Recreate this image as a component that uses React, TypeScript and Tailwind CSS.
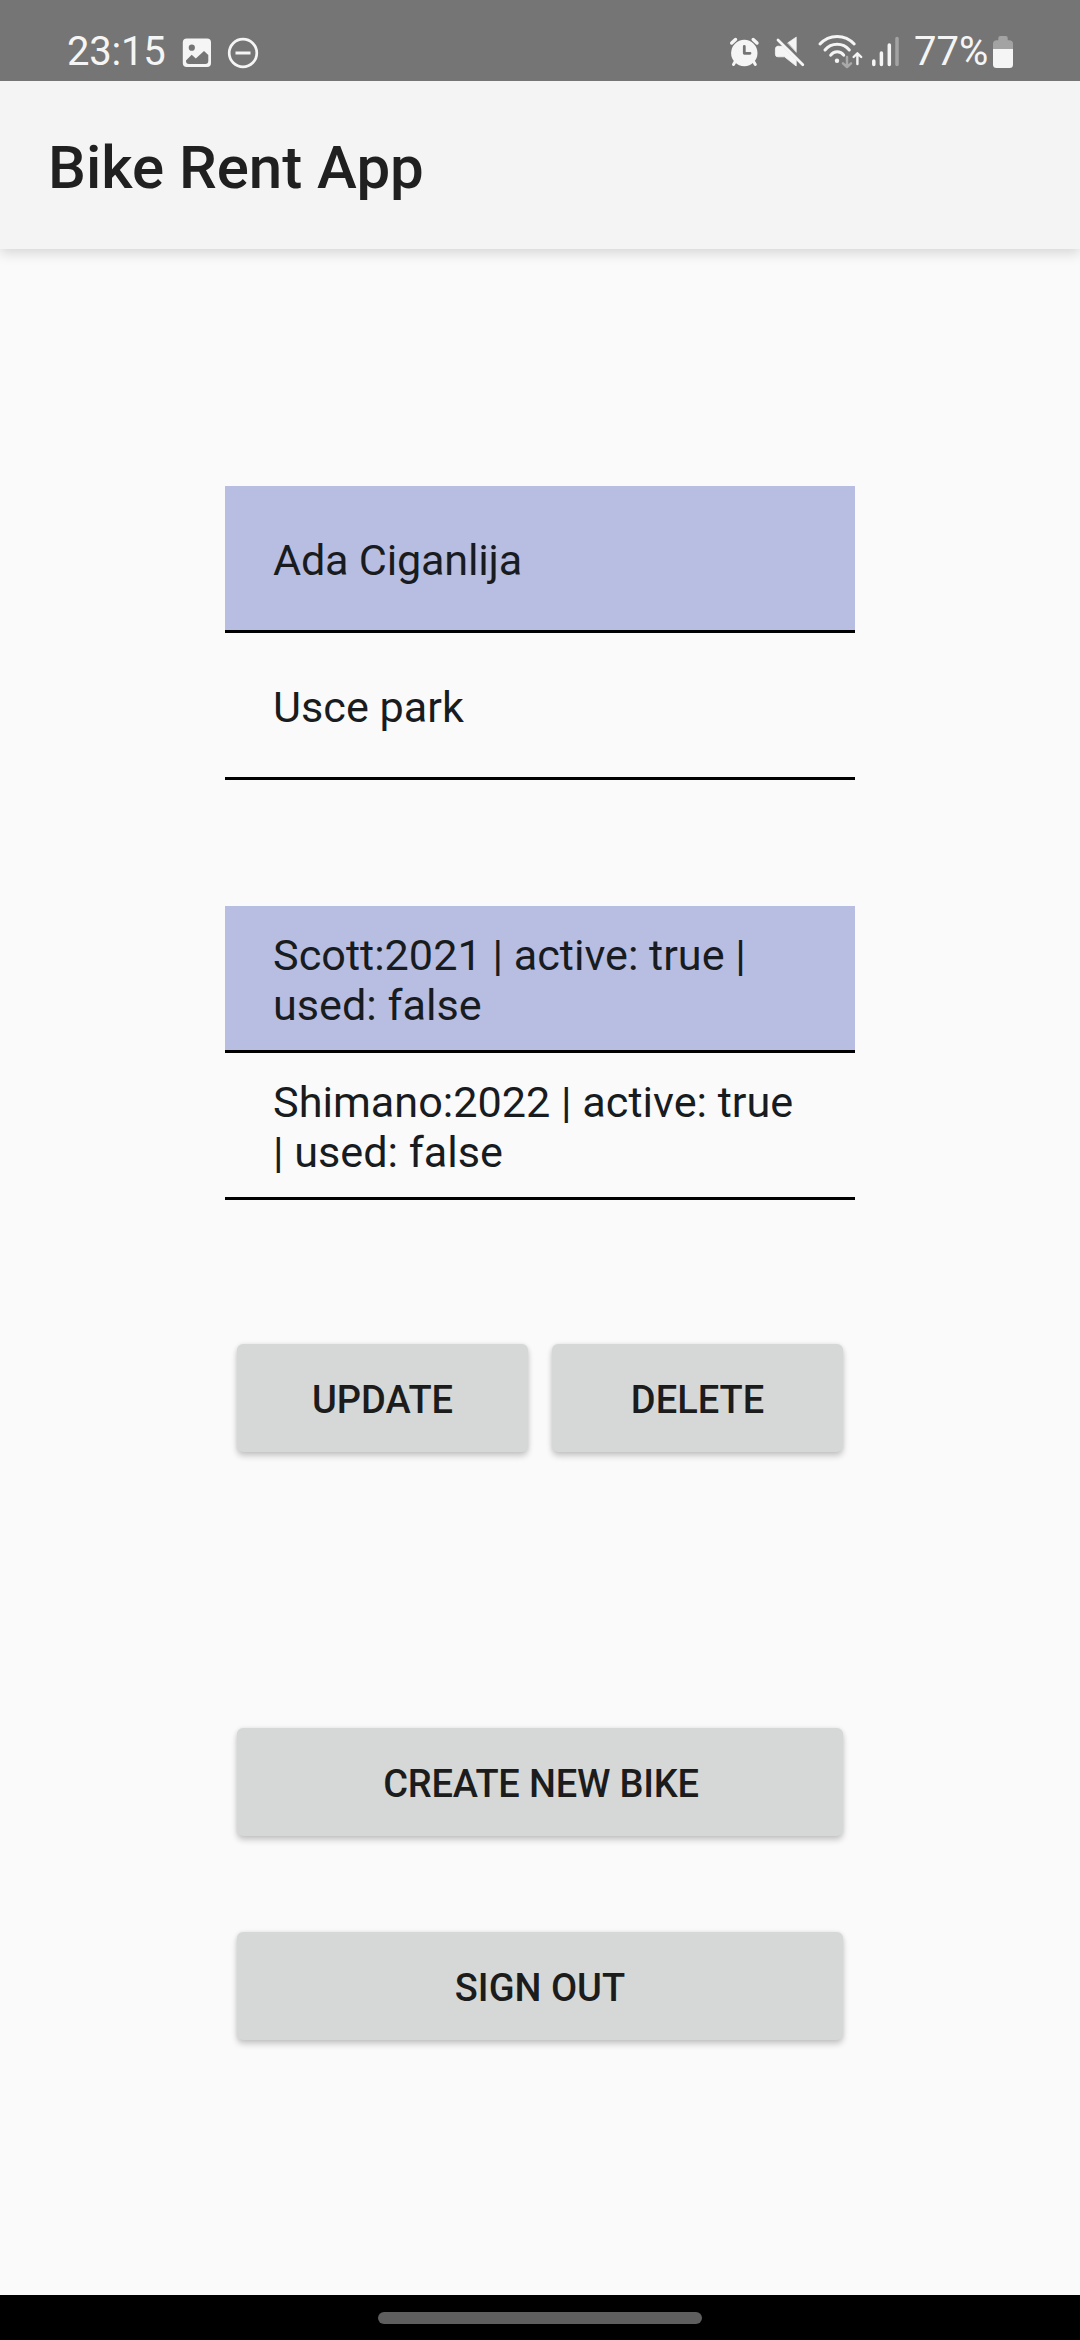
import React from "react";

function NotificationIcons() {
  return (
    <svg className="h-[81px] w-[100px]" viewBox="171 0 100 81" fill="none" strokeLinecap="round">
      <rect x="182.8" y="38.5" width="28.2" height="28.5" rx="4" fill="#f5f5f5" />
      <circle cx="191.8" cy="47.7" r="3.1" fill="#757575" />
      <path d="M186 60.5L191.7 54.8L195.8 58.6L204 51L208.3 55V61Q208.3 64 205.3 64H189Q186 64 186 61Z" fill="#757575" />
      <circle cx="243" cy="53" r="13.8" stroke="#f5f5f5" strokeWidth="2.7" />
      <path d="M235.5 53H250.5" stroke="#f5f5f5" strokeWidth="3" strokeLinecap="butt" />
    </svg>
  );
}

function SystemIcons() {
  return (
    <svg
      className="h-[81px] w-[190px]"
      viewBox="720 0 190 81"
      fill="none"
      stroke="#f5f5f5"
      strokeLinecap="round"
      strokeLinejoin="round"
    >
      <circle cx="744.3" cy="53" r="13.2" fill="#f5f5f5" stroke="none" />
      <path d="M731.7 43L735.5 39.5M753.2 39.5L757 43" strokeWidth="3.4" />
      <path d="M735.5 61L733.5 64.5M753.3 61L755.3 64.5" strokeWidth="3" />
      <path d="M744.3 46.5V53.3H750" stroke="#757575" strokeWidth="2.8" />

      <path d="M787.8 42.8L796.3 37V52Z" fill="#f5f5f5" strokeWidth=".6" />
      <path d="M778 46.3H782.5L796.2 60V66L784.5 56.8H778Q775.4 56.8 775.4 54.2V49Q775.4 46.3 778 46.3Z" fill="#f5f5f5" strokeWidth=".8" />
      <path d="M778 40L802.8 64.7" strokeWidth="2.8" />

      <path d="M820 44A23 23 0 0 1 854.2 44" strokeWidth="3" />
      <path d="M825 50A15.6 15.6 0 0 1 849.3 50" strokeWidth="3" />
      <path d="M830.7 55.2A8 8 0 0 1 843.7 55.2" strokeWidth="3" />
      <circle cx="837" cy="60.7" r="2.2" fill="#f5f5f5" stroke="none" />
      <path d="M847 57V67M843 63.3L847 67.2L851 63.3" stroke="#a9a9a9" strokeWidth="2.5" />
      <path d="M857.4 64V53.5M853.6 57L857.4 53.3L861.2 57" strokeWidth="2.4" />

      <path d="M873.8 61V64.6M881.4 53V64.6M889.3 45V64.6" strokeWidth="3.5" />
      <path d="M897 38.5V64.6" stroke="#a3a3a3" strokeWidth="3.5" />
    </svg>
  );
}

function Battery() {
  return (
    <svg className="h-[81px] w-[30px]" viewBox="990 0 30 81">
      <path d="M993 49V44Q993 40.3 996.7 40.3H998.3V38Q998.3 36 1000.3 36H1005.7Q1007.7 36 1007.7 38V40.3H1009.3Q1013 40.3 1013 44V49Z" fill="#a3a3a3" />
      <path d="M993 49H1013V64.5Q1013 68 1009.5 68H996.5Q993 68 993 64.5Z" fill="#f5f5f5" />
    </svg>
  );
}

function StatusBar() {
  return (
    <div className="relative z-10 flex h-[81px] justify-between bg-[#757575] pl-[67px] pr-[60px] text-[40px] leading-[81px] text-[#f5f5f5]">
      <div className="flex">
        <span className="h-[81px] w-[104px] pt-[11px] tracking-[-0.2px]">23:15</span>
        <NotificationIcons />
      </div>
      <div className="flex">
        <SystemIcons />
        <span className="h-[81px] w-[80px] pl-[4px] pt-[11px]">77%</span>
        <Battery />
      </div>
    </div>
  );
}

function List({ items, firstTracking = "" }: { items: string[]; firstTracking?: string }) {
  return (
    <ul className="w-[630px]">
      {items.map((item, i) => (
        <li
          key={item}
          className={`flex h-[147px] items-center border-b-[3px] border-black px-[48px] pt-[5px] text-[43.2px] leading-[50px] text-[#191c1f] ${
            i === 0 ? `bg-[#b8bee2] ${firstTracking}` : ""
          }`}
        >
          {item}
        </li>
      ))}
    </ul>
  );
}

function Button({ children, className = "" }: { children: React.ReactNode; className?: string }) {
  return (
    <button
      className={`h-[108px] flex-1 rounded-[6px] bg-[#d6d8d7] pt-[3px] text-[38px] font-medium leading-[46px] text-[#1c1c1c] shadow-[0_4px_6px_rgba(0,0,0,0.2),0_0_4px_rgba(0,0,0,0.08)] ${className}`}
    >
      {children}
    </button>
  );
}

export default function App() {
  return (
    <div className="flex h-[2340px] w-[1080px] flex-col bg-[#fafafa] font-['Roboto',sans-serif]">
      <StatusBar />
      <header className="flex h-[168px] items-center bg-[#f4f4f4] pl-[48px] pt-[5px] shadow-[0_4px_12px_rgba(0,0,0,0.15)]">
        <h1 className="text-[60px] font-medium leading-[70px] text-[#202020]">Bike Rent App</h1>
      </header>
      <main className="flex flex-1 flex-col items-center pt-[237px]">
        <List items={["Ada Ciganlija", "Usce park"]} firstTracking="tracking-[-0.22px]" />
        <div className="mt-[126px]">
          <List items={["Scott:2021 | active: true | used: false", "Shimano:2022 | active: true | used: false"]} />
        </div>
        <div className="mt-[144px] flex w-[606px] gap-6">
          <Button>UPDATE</Button>
          <Button>DELETE</Button>
        </div>
        <div className="mt-[276px] flex w-[606px]">
          <Button className="pl-[2px] tracking-[-0.2px]">CREATE NEW BIKE</Button>
        </div>
        <div className="mt-24 flex w-[606px]">
          <Button>SIGN OUT</Button>
        </div>
      </main>
      <nav className="flex h-[45px] justify-center bg-black pt-[17px]">
        <div className="h-3 w-[324px] rounded-full bg-[#5e5e5e]" />
      </nav>
    </div>
  );
}
